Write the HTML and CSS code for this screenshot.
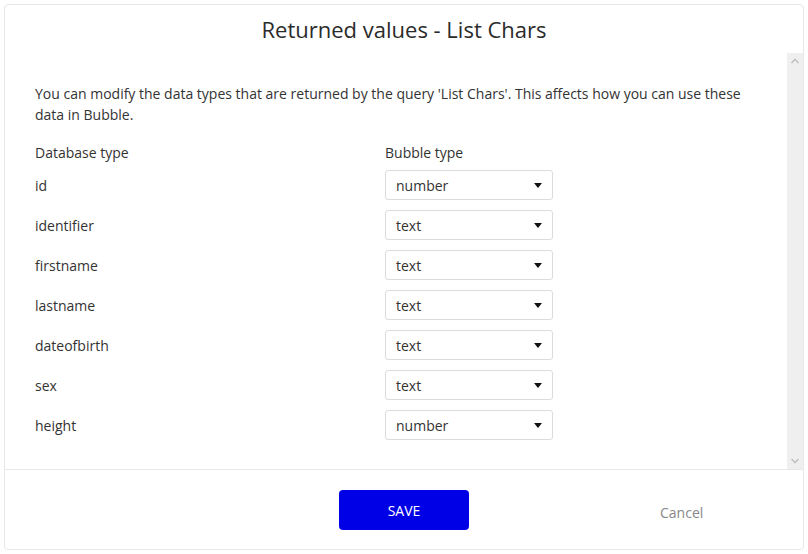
FILE: index.html
```html
<!DOCTYPE html>
<html lang="en">
<head>
    <meta charset="UTF-8">
    <title>Returned values - List Chars</title>
    <link rel="stylesheet" href="styles.css">
</head>
<body>
    <div class="modal">
        <div class="modal-header">Returned values - List Chars</div>

        <div class="modal-body">
            <div class="content">
                <p class="intro">You can modify the data types that are returned by the query 'List Chars'. This affects how you can use these data in Bubble.</p>

                <div class="types">
                    <div class="col-head">Database type</div>
                    <div class="col-head">Bubble type</div>

                    <div class="field">id</div>
                    <div class="dropdown">number<span class="caret"></span></div>

                    <div class="field">identifier</div>
                    <div class="dropdown">text<span class="caret"></span></div>

                    <div class="field">firstname</div>
                    <div class="dropdown">text<span class="caret"></span></div>

                    <div class="field">lastname</div>
                    <div class="dropdown">text<span class="caret"></span></div>

                    <div class="field">dateofbirth</div>
                    <div class="dropdown">text<span class="caret"></span></div>

                    <div class="field">sex</div>
                    <div class="dropdown">text<span class="caret"></span></div>

                    <div class="field">height</div>
                    <div class="dropdown">number<span class="caret"></span></div>
                </div>
            </div>

            <div class="scrollbar">
                <svg width="16" height="16" viewBox="0 0 16 16"><path d="M4.5 10 L8 6.5 L11.5 10" fill="none" stroke="#c2c2c2" stroke-width="1.6"/></svg>
                <svg width="16" height="16" viewBox="0 0 16 16"><path d="M4.5 6 L8 9.5 L11.5 6" fill="none" stroke="#c2c2c2" stroke-width="1.6"/></svg>
            </div>
        </div>

        <div class="modal-footer">
            <button class="save">SAVE</button>
            <span class="cancel">Cancel</span>
        </div>
    </div>
</body>
</html>
```

FILE: styles.css
```css
body {
    margin: 0;
    font-family: "Open Sans", "Noto Sans", sans-serif;
    font-size: 14px;
    color: #333;
    background: #fff;
}
.modal {
    margin: 4px;
    width: 800px;
    height: 546px;
    box-sizing: border-box;
    border: 1px solid #e8e8e8;
    border-radius: 4px;
    display: flex;
    flex-direction: column;
}
.modal-header {
    height: 48px;
    line-height: 48px;
    text-align: center;
    font-size: 22px;
    color: #2b2b2b;
}
.modal-body {
    height: 416px;
    display: flex;
    border-bottom: 1px solid #e8e8e8;
}
.content {
    flex: 1;
    padding: 30px 30px 0 30px;
}
.intro {
    margin: 0 0 17px 0;
    line-height: 21px;
    padding-right: 10px;
}
.types {
    display: grid;
    grid-template-columns: 350px 168px;
    row-gap: 10px;
    align-items: center;
}
.col-head {
    line-height: 21px;
    margin-bottom: -3px;
}
.field {
    line-height: 21px;
}
.dropdown {
    height: 30px;
    box-sizing: border-box;
    border: 1px solid #dcdcdc;
    border-radius: 3px;
    padding: 0 10px;
    display: flex;
    justify-content: space-between;
    align-items: center;
    color: #333;
}
.caret {
    width: 0;
    height: 0;
    border-left: 4.5px solid transparent;
    border-right: 4.5px solid transparent;
    border-top: 5px solid #111;
}
.scrollbar {
    width: 16px;
    background: #efefef;
    display: flex;
    flex-direction: column;
    justify-content: space-between;
}
.modal-footer {
    flex: 1;
    display: flex;
    align-items: center;
    padding-left: 334px;
}
.save {
    width: 130px;
    height: 40px;
    background: #0000e6;
    color: #fff;
    border: none;
    border-radius: 4px;
    font-family: inherit;
    font-size: 14px;
    margin-top: 1px;
}
.cancel {
    margin-left: 191px;
    margin-top: 5px;
    color: #888;
    font-size: 14px;
}
```
